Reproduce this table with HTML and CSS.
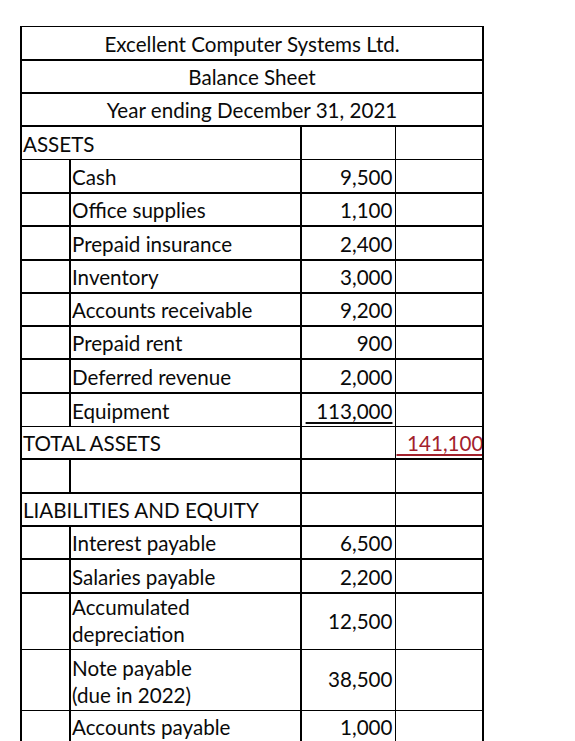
FILE: index.html
```html
<!DOCTYPE html>
<html lang="en">
<head>
<meta charset="utf-8">
<title>Balance Sheet</title>
<link rel="stylesheet" href="styles.css">
</head>
<body>
<table class="sheet">
  <colgroup>
    <col class="c1"><col class="c2"><col class="c3"><col class="c4">
  </colgroup>
  <tbody>
    <tr class="row top"><td colspan="4" class="center">Excellent Computer Systems Ltd.</td></tr>
    <tr class="row"><td colspan="4" class="center">Balance Sheet</td></tr>
    <tr class="row"><td colspan="4" class="center">Year ending December 31, 2021</td></tr>
    <tr class="row thin-bottom"><td colspan="2" class="label">ASSETS</td><td class="num"></td><td class="extra"></td></tr>
    <tr class="row"><td></td><td class="label">Cash</td><td class="num">9,500</td><td class="extra"></td></tr>
    <tr class="row"><td></td><td class="label">Office supplies</td><td class="num">1,100</td><td class="extra"></td></tr>
    <tr class="row"><td></td><td class="label">Prepaid insurance</td><td class="num">2,400</td><td class="extra"></td></tr>
    <tr class="row"><td></td><td class="label">Inventory</td><td class="num">3,000</td><td class="extra"></td></tr>
    <tr class="row"><td></td><td class="label">Accounts receivable</td><td class="num">9,200</td><td class="extra"></td></tr>
    <tr class="row"><td></td><td class="label">Prepaid rent</td><td class="num">900</td><td class="extra"></td></tr>
    <tr class="row"><td></td><td class="label">Deferred revenue</td><td class="num">2,000</td><td class="extra"></td></tr>
    <tr class="row thin-bottom"><td></td><td class="label">Equipment</td><td class="num"><span class="ul">&nbsp;&nbsp;113,000</span></td><td class="extra"></td></tr>
    <tr class="row"><td colspan="2" class="label">TOTAL ASSETS</td><td class="num"></td><td class="extra num total"><span class="ul">&nbsp;&nbsp;141,100</span></td></tr>
    <tr class="row"><td></td><td class="label"></td><td class="num"></td><td class="extra"></td></tr>
    <tr class="row"><td colspan="2" class="label">LIABILITIES AND EQUITY</td><td class="num"></td><td class="extra"></td></tr>
    <tr class="row"><td></td><td class="label">Interest payable</td><td class="num">6,500</td><td class="extra"></td></tr>
    <tr class="row"><td></td><td class="label">Salaries payable</td><td class="num">2,200</td><td class="extra"></td></tr>
    <tr class="row tall1 thin-bottom"><td></td><td class="label wrap">Accumulated<br>depreciation</td><td class="num mid">12,500</td><td class="extra"></td></tr>
    <tr class="row tall2 thin-bottom"><td></td><td class="label wrap">Note payable<br>(due in 2022)</td><td class="num mid">38,500</td><td class="extra"></td></tr>
    <tr class="row"><td></td><td class="label">Accounts payable</td><td class="num">1,000</td><td class="extra"></td></tr>
  </tbody>
</table>
</body>
</html>
```
FILE: styles.css
```css
html, body {
  margin: 0;
  background: #ffffff;
}

body {
  font-family: Lato, "Open Sans", "Liberation Sans", sans-serif;
  color: #0a0a0a;
}

.sheet {
  margin: 26px 0 0 20px;
  border-collapse: collapse;
  table-layout: fixed;
  width: 462px;
  font-size: 20.6px;
  line-height: 27px;
}

.c1 { width: 49px; }
.c2 { width: 231px; }
.c3 { width: 94px; }
.c4 { width: 88px; }

.row { height: 33.3px; }
.tall1 { height: 56px; }
.tall2 { height: 61px; }

.sheet td {
  border: 2px solid #000000;
  padding: 0 1px 1px 1px;
  vertical-align: bottom;
  white-space: nowrap;
  overflow: hidden;
}

.top td { border-top-width: 1px; }

.thin-bottom td { border-bottom-width: 1px; }
.thin-bottom + .row td { border-top-width: 1px; }

.sheet td.num {
  text-align: right;
  padding-right: 2px;
  border-right-width: 1px;
}

.sheet td.extra {
  border-left-width: 1px;
}

.sheet td.total {
  border-right-width: 2px;
}

.sheet td.mid {
  vertical-align: middle;
  padding-bottom: 0;
}

.center {
  text-align: center;
}

.label {
  text-align: left;
}

.ul {
  text-decoration: underline;
  text-decoration-thickness: 1.5px;
  text-underline-offset: 3px;
}

.total {
  color: #a3212c;
}
```
